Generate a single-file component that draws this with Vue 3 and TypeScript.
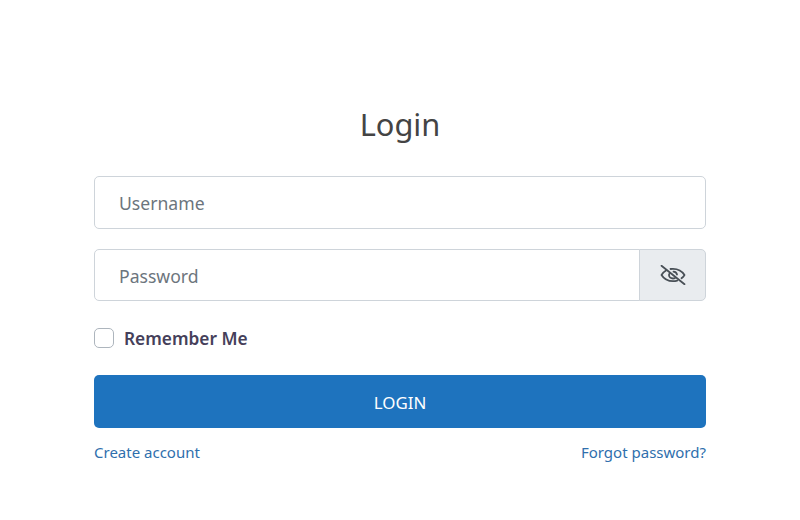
<script setup lang="ts">
import { ref } from "vue";
const username = ref("");
const password = ref("");
const remember = ref(false);
</script>

<template>
  <main class="page">
    <h1 class="title">Login</h1>
    <form class="form" @submit.prevent>
      <input v-model="username" class="field first" type="text" placeholder="Username" />
      <div class="group">
        <input v-model="password" class="field joined" type="password" placeholder="Password" />
        <button class="eye" type="button" aria-label="Show password">
          <svg width="26" height="20" viewBox="0 0 26 20" fill="none" stroke="#495057" stroke-width="1.800" stroke-linecap="round" stroke-linejoin="round">
            <path d="M6 5.500C4.200 6.600 2.700 8 1.500 10c2.600 4.200 6.600 6.200 11.500 6.200 1.500 0 2.900-.2 4.200-.6" />
            <path d="M10.500 4c.8-.1 1.700-.2 2.500-.2 4.900 0 8.900 2 11.500 6.200-.8 1.300-1.800 2.400-3 3.300" />
            <path d="M9.600 8.500c-.4.500-.6 1-.6 1.600 0 2 1.800 3.400 4 3.400.7 0 1.300-.1 1.900-.4" />
            <path d="M13.500 6.700c1.800.2 3.200 1.300 3.500 2.800" />
            <path d="M1.500 .8l23 18.400" />
          </svg>
        </button>
      </div>
      <label class="remember">
        <input v-model="remember" class="check" type="checkbox" />
        <span class="remember-text">Remember Me</span>
      </label>
      <button class="submit" type="submit">LOGIN</button>
      <div class="links">
        <a href="#">Create account</a>
        <a href="#">Forgot password?</a>
      </div>
    </form>
  </main>
</template>

<style scoped>
.page {
  width: 800px;
  height: 520px;
  box-sizing: border-box;
  padding: 101px 94px 0;
  font-family: "Noto Sans", "Open Sans", sans-serif;
  background: #fff;
}
.title {
  margin: 0 0 28px;
  font-size: 30.800px;
  font-weight: 400;
  line-height: 47px;
  text-align: center;
  color: #444;
}
.form {
  display: flex;
  flex-direction: column;
}
.field {
  box-sizing: border-box;
  width: 100%;
  height: 52px;
  padding: 0 24px;
  border: 1px solid #ced4da;
  border-radius: 5px;
  font: inherit;
  font-size: 17.600px;
  color: #495057;
  outline: none;
}
.first {
  height: 53px;
}
.joined {
  flex: 1;
  padding-top: 2px;
  border-radius: 5px 0 0 5px;
}
.field::placeholder {
  color: #6c757d;
  opacity: 1;
}
.group {
  display: flex;
  margin-top: 20px;
}
.eye {
  width: 67px;
  height: 52px;
  margin-left: -1px;
  display: flex;
  align-items: center;
  justify-content: center;
  padding: 0;
  background: #e9ecef;
  border: 1px solid #ced4da;
  border-radius: 0 5px 5px 0;
}
.remember {
  display: flex;
  align-items: center;
  gap: 10px;
  height: 22px;
  margin-top: 26px;
  font-size: 17.300px;
  font-weight: 600;
  color: #45405a;
}
.remember-text {
  padding-top: 2px;
  line-height: 20px;
}
.check {
  appearance: none;
  width: 20px;
  height: 20px;
  margin: 0;
  background: #fff;
  border: 1px solid #adb5bd;
  border-radius: 5px;
}
.submit {
  height: 53px;
  margin-top: 26px;
  padding: 2px 0 0;
  border: none;
  border-radius: 5px;
  background: #1e73be;
  color: #fff;
  font: inherit;
  font-size: 16.900px;
}
.links {
  display: flex;
  justify-content: space-between;
  margin-top: 13px;
  font-size: 15px;
  line-height: 22px;
}
.links a {
  color: #2f6fad;
  text-decoration: none;
}
</style>

<style>
html, body { margin: 0; background: #fff; }
</style>
